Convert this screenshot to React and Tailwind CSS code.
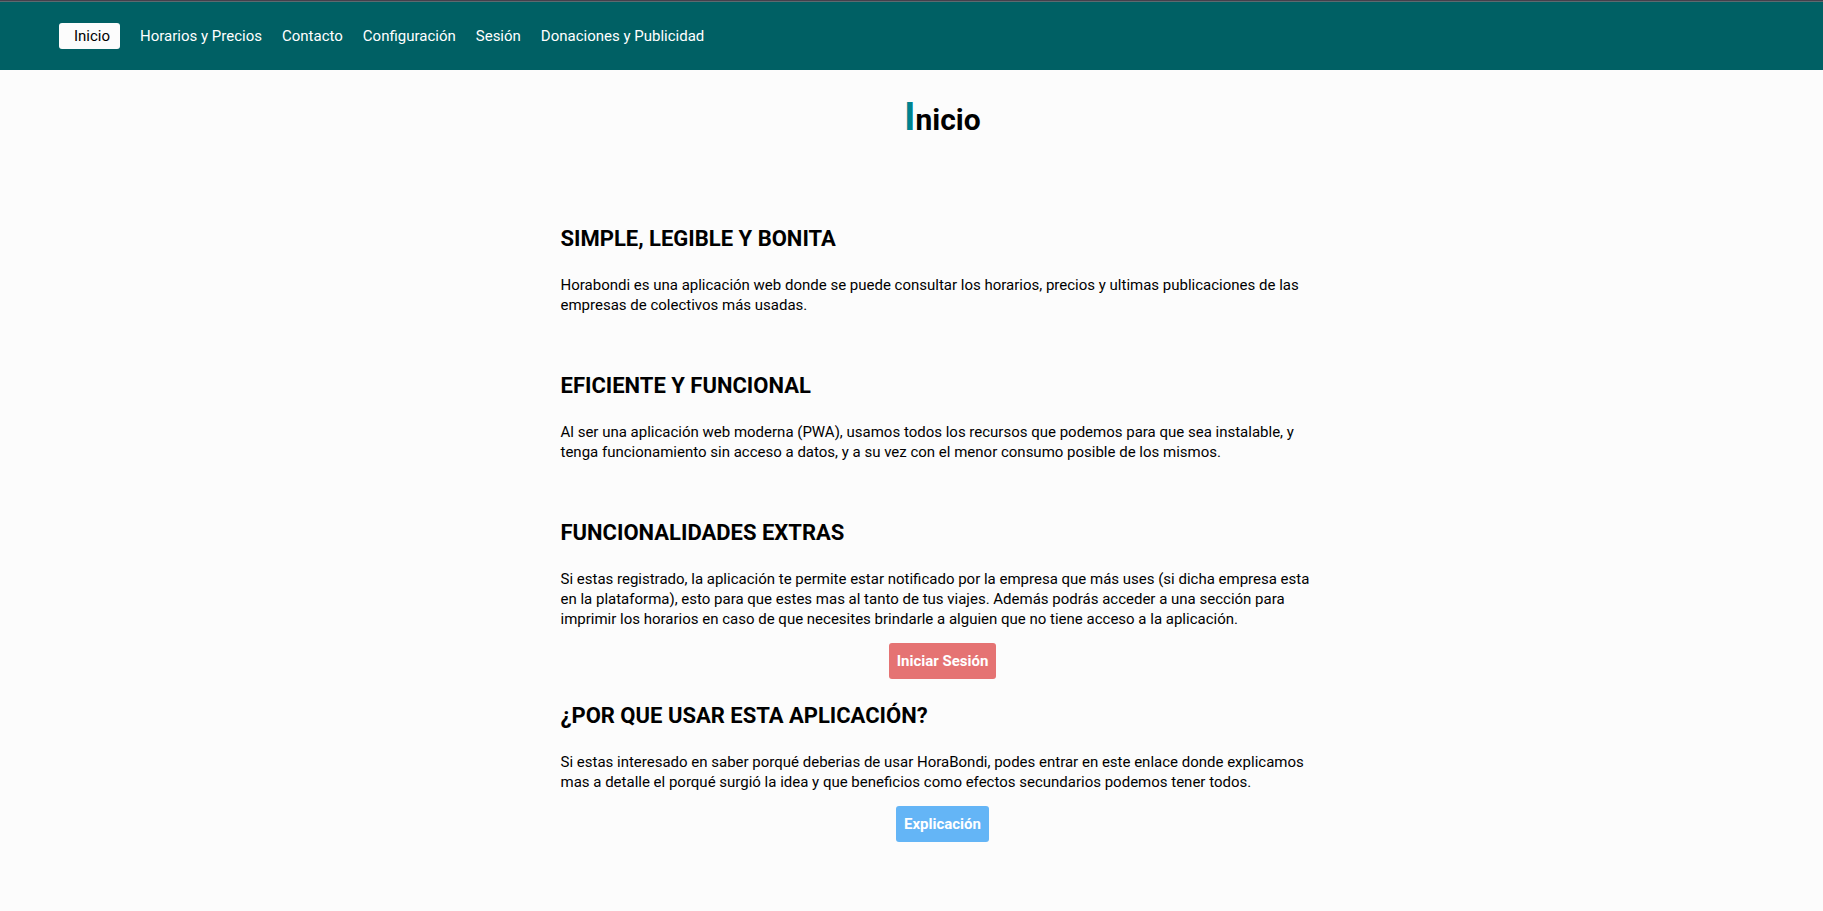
const links = ["Horarios y Precios", "Contacto", "Configuración", "Sesión", "Donaciones y Publicidad"];

function Section({ title, children, action, className }) {
  return (
    <section className={className}>
      <h2 className="text-[22px] leading-8 font-bold uppercase">{title}</h2>
      <p className="mt-5 text-[15px] leading-5">{children}</p>
      {action && <div className="mt-[14px] flex justify-center">{action}</div>}
    </section>
  );
}

export default function App() {
  return (
    <div className="min-h-screen bg-[#fcfcfc] font-['Roboto',sans-serif] text-black">
      <header className="border-t border-[#45404c] bg-[#006064]">
        <nav aria-label="Principal" className="flex items-center gap-5 border-t border-[#5c6a70] py-[21px] pl-[59px] text-[15px] leading-[26px] text-white">
          <a href="#inicio" aria-current="page" className="rounded-[3px] bg-[#fcfcfc] pr-[10px] pl-[15px] text-black">
            Inicio
          </a>
          {links.map((label) => (
            <a key={label} href="#">{label}</a>
          ))}
        </nav>
      </header>
      <main id="inicio" className="flex flex-col items-center pb-16 pl-[62px]">
        <h1 className="mt-[27px] text-[30px] leading-10 font-bold first-letter:text-[38px] first-letter:text-[#00838f]">Inicio</h1>
        <div className="mt-[83px] w-full max-w-[764px]">
          <Section title="Simple, legible y bonita">
            Horabondi es una aplicación web donde se puede consultar los horarios, precios y ultimas publicaciones de las
            empresas de colectivos más usadas.
          </Section>
          <Section title="Eficiente y funcional" className="mt-[55px]">
            Al ser una aplicación web moderna (PWA), usamos todos los recursos que podemos para que sea instalable, y
            tenga funcionamiento sin acceso a datos, y a su vez con el menor consumo posible de los mismos.
          </Section>
          <Section
            title="Funcionalidades extras"
            className="mt-[55px]"
            action={
              <button type="button" className="h-9 rounded-[3px] bg-[#e57373] px-2 text-[15px] font-bold text-white">
                Iniciar Sesión
              </button>
            }
          >
            Si estas registrado, la aplicación te permite estar notificado por la empresa que más uses (si dicha empresa esta
            en la plataforma), esto para que estes mas al tanto de tus viajes. Además podrás acceder a una sección para
            imprimir los horarios en caso de que necesites brindarle a alguien que no tiene acceso a la aplicación.
          </Section>
          <Section
            title="¿Por que usar esta aplicación?"
            className="mt-[21px]"
            action={
              <button type="button" className="h-9 rounded-[3px] bg-[#64b5f6] px-2 text-[15px] font-bold text-white">
                Explicación
              </button>
            }
          >
            Si estas interesado en saber porqué deberias de usar HoraBondi, podes entrar en este enlace donde explicamos
            mas a detalle el porqué surgió la idea y que beneficios como efectos secundarios podemos tener todos.
          </Section>
        </div>
      </main>
    </div>
  );
}
